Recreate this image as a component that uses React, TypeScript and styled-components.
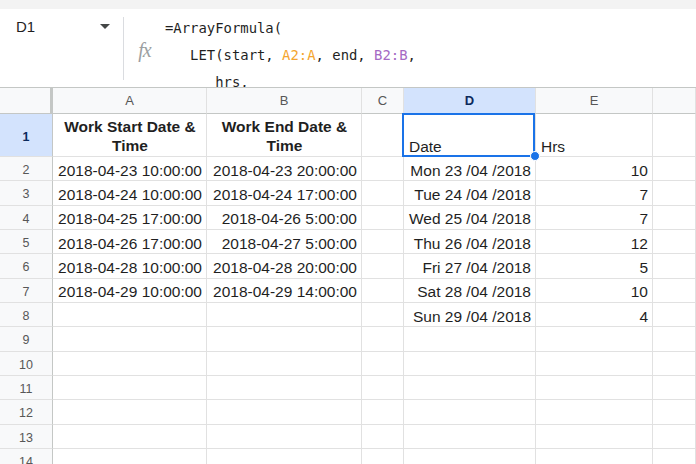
import React from "react"
import styled, { createGlobalStyle, css } from "styled-components"

const GlobalStyle = createGlobalStyle`
    html, body {
        margin: 0;
        padding: 0;
        background: #ffffff;
        overflow: hidden;
    }
    body {
        font-family: "Liberation Sans", Arial, sans-serif;
        color: #1f1f1f;
    }
`

const gridLine = "#e1e1e1"
const headerLine = "#c4c7c5"
const selectBlue = "#1a73e8"

const Page = styled.div`
    width: 696px;
    height: 464px;
    display: flex;
    flex-direction: column;
    overflow: hidden;
`

const TopStrip = styled.div`
    height: 9px;
    flex: none;
    background: #f3f3f3;
`

const FormulaBar = styled.div`
    height: 78px;
    flex: none;
    display: flex;
    border-bottom: 1px solid ${headerLine};
    background: #ffffff;
    overflow: hidden;
`

const NameBox = styled.div`
    width: 123px;
    flex: none;
    display: flex;
    align-items: flex-start;
    padding: 9px 13px 0 16px;
    box-sizing: border-box;
    font-size: 15px;
    line-height: 18px;
    color: #1f1f1f;
`

const Caret = styled.span`
    margin-left: auto;
    margin-top: 6px;
    width: 0;
    height: 0;
    border-left: 5px solid transparent;
    border-right: 5px solid transparent;
    border-top: 5px solid #444746;
`

const Divider = styled.div`
    width: 1px;
    flex: none;
    margin: 8px 0 7px;
    background: #dadce0;
`

const Fx = styled.div`
    width: 41px;
    flex: none;
    display: flex;
    justify-content: center;
    padding-top: 31px;
    box-sizing: border-box;
    font-family: "Liberation Serif", "DejaVu Serif", serif;
    font-style: italic;
    font-size: 20px;
    line-height: 20px;
    color: #9c9fa2;
    letter-spacing: -1px;
`

const Formula = styled.pre`
    margin: 0;
    padding-top: 6px;
    font-family: "DejaVu Sans Mono", "Liberation Mono", monospace;
    font-size: 13.9px;
    line-height: 27px;
    color: #1f1f1f;
    white-space: pre;
`

const RefA = styled.span`
    color: #f4a52e;
`

const RefB = styled.span`
    color: #a56ac4;
`

const Sheet = styled.div`
    display: grid;
    grid-template-columns: 53px 154px 155px 42px 132px 117px 1fr;
    grid-template-rows: 26px 43px;
    grid-auto-rows: 24.33px;
`

const Corner = styled.div`
    background: #f8f9fa;
    border-right: 3px solid ${headerLine};
    border-bottom: 1px solid ${headerLine};
    box-sizing: border-box;
`

const ColHead = styled.div<{ $active?: boolean }>`
    display: flex;
    align-items: center;
    justify-content: center;
    box-sizing: border-box;
    border-right: 1px solid ${gridLine};
    border-bottom: 1px solid ${headerLine};
    background: ${(p) => (p.$active ? "#d3e3fd" : "#f8f9fa")};
    color: ${(p) => (p.$active ? "#0b2a5c" : "#575757")};
    font-weight: ${(p) => (p.$active ? 700 : 400)};
    font-size: 13px;
`

const RowHead = styled.div<{ $active?: boolean }>`
    display: flex;
    align-items: center;
    justify-content: center;
    box-sizing: border-box;
    border-right: 1px solid ${headerLine};
    border-bottom: 1px solid ${gridLine};
    background: ${(p) => (p.$active ? "#d3e3fd" : "#f8f9fa")};
    color: ${(p) => (p.$active ? "#0b2a5c" : "#575757")};
    font-weight: ${(p) => (p.$active ? 700 : 400)};
    font-size: 12.5px;
    padding-top: 3px;
`

const Cell = styled.div<{ $align?: "left" | "right" | "center"; $bold?: boolean; $selected?: boolean }>`
    position: relative;
    display: flex;
    align-items: flex-end;
    box-sizing: border-box;
    padding: 0 4px 0 5px;
    border-right: 1px solid ${gridLine};
    border-bottom: 1px solid ${gridLine};
    font-size: 15.5px;
    line-height: 18.5px;
    white-space: nowrap;
    color: #1f1f1f;
    justify-content: ${(p) =>
        p.$align === "right" ? "flex-end" : p.$align === "center" ? "center" : "flex-start"};
    text-align: ${(p) => p.$align ?? "left"};
    ${(p) =>
        p.$bold &&
        css`
            font-weight: 700;
            white-space: normal;
            padding-bottom: 1px;
        `}
    ${(p) =>
        p.$selected &&
        css`
            &::after {
                content: "";
                position: absolute;
                left: -2px;
                top: -1px;
                right: 0;
                bottom: -1px;
                border: 2px solid ${selectBlue};
                pointer-events: none;
            }
        `}
`

const Handle = styled.span`
    position: absolute;
    right: -5px;
    bottom: -5px;
    width: 8px;
    height: 8px;
    border-radius: 50%;
    background: ${selectBlue};
    border: 1px solid #ffffff;
    z-index: 2;
`

type Row = [string, string, string, string]

const data: Row[] = [
    ["2018-04-23 10:00:00", "2018-04-23 20:00:00", "Mon 23 /04 /2018", "10"],
    ["2018-04-24 10:00:00", "2018-04-24 17:00:00", "Tue 24 /04 /2018", "7"],
    ["2018-04-25 17:00:00", "2018-04-26 5:00:00", "Wed 25 /04 /2018", "7"],
    ["2018-04-26 17:00:00", "2018-04-27 5:00:00", "Thu 26 /04 /2018", "12"],
    ["2018-04-28 10:00:00", "2018-04-28 20:00:00", "Fri 27 /04 /2018", "5"],
    ["2018-04-29 10:00:00", "2018-04-29 14:00:00", "Sat 28 /04 /2018", "10"],
    ["", "", "Sun 29 /04 /2018", "4"],
]

const columns = ["A", "B", "C", "D", "E", ""]

export default function App() {
    const rows: Row[] = [...data]
    while (rows.length < 13) rows.push(["", "", "", ""])

    return (
        <Page>
            <GlobalStyle />
            <TopStrip />
            <FormulaBar>
                <NameBox>
                    D1
                    <Caret />
                </NameBox>
                <Divider />
                <Fx>fx</Fx>
                <Formula>
                    {"=ArrayFormula(\n   LET(start, "}
                    <RefA>A2:A</RefA>
                    {", end, "}
                    <RefB>B2:B</RefB>
                    {",\n      hrs,"}
                </Formula>
            </FormulaBar>

            <Sheet>
                <Corner />
                {columns.map((c, i) => (
                    <ColHead key={i} $active={c === "D"}>
                        {c}
                    </ColHead>
                ))}

                <RowHead $active>1</RowHead>
                <Cell $align="center" $bold>
                    Work Start Date &amp; Time
                </Cell>
                <Cell $align="center" $bold>
                    Work End Date &amp; Time
                </Cell>
                <Cell />
                <Cell $selected>
                    Date
                    <Handle />
                </Cell>
                <Cell>Hrs</Cell>
                <Cell />

                {rows.map((r, i) => (
                    <React.Fragment key={i}>
                        <RowHead>{i + 2}</RowHead>
                        <Cell $align="right">{r[0]}</Cell>
                        <Cell $align="right">{r[1]}</Cell>
                        <Cell />
                        <Cell $align="right">{r[2]}</Cell>
                        <Cell $align="right">{r[3]}</Cell>
                        <Cell />
                    </React.Fragment>
                ))}
            </Sheet>
        </Page>
    )
}
